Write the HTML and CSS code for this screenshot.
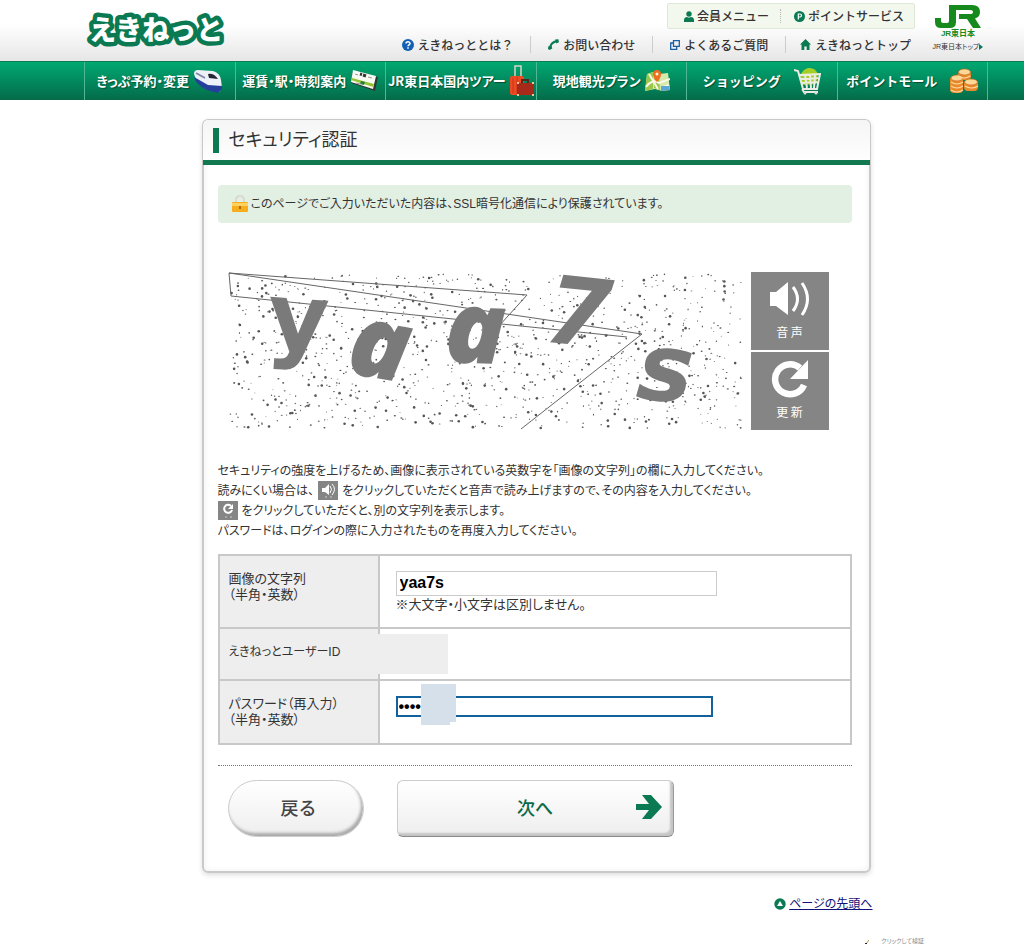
FILE: index.html
```html
<!DOCTYPE html>
<html lang="ja">
<head>
<meta charset="utf-8">
<title>セキュリティ認証 | えきねっと</title>
<link rel="stylesheet" href="styles.css">
</head>
<body>
<header class="site-header" id="top">
  <div class="header-inner">
    <a class="logo" href="#" aria-label="えきねっと">
      <svg width="140" height="42" viewBox="0 0 140 42"><text x="3" y="31" class="logo-text">えきねっと</text></svg>
    </a>
    <div class="menus">
      <nav class="member-menu">
        <a href="#"><svg width="10" height="11" viewBox="0 0 10 11"><circle cx="5" cy="3" r="2.7" fill="#0b7a52"/><path d="M0 11V9Q0 6.300 3 6l2 .7L7 6q3 .3 3 3v2z" fill="#0b7a52"/></svg>会員メニュー</a>
        <a href="#"><svg width="11" height="11" viewBox="0 0 11 11"><circle cx="5.500" cy="5.500" r="5.500" fill="#0b7a52"/><path d="M4.300 8.500V3h1.700a1.500 1.500 0 0 1 0 3H4.300" fill="none" stroke="#fff" stroke-width="1.200"/></svg>ポイントサービス</a>
      </nav>
      <nav class="help-menu">
        <a href="#"><svg width="12" height="12" viewBox="0 0 12 12"><circle cx="6" cy="6" r="6" fill="#1260b4"/><path d="M4 4.600C4 2.300 8 2.300 8 4.500c0 1.400-2 1.300-2 2.700M6 8.300v1.400" fill="none" stroke="#fff" stroke-width="1.500"/></svg>えきねっととは？</a>
        <a href="#"><svg width="11" height="11" viewBox="0 0 11 11"><path d="M2 9Q2.500 3.500 9 2" fill="none" stroke="#0b7a52" stroke-width="2"/><path d="M7 .5l3.500-.2.4 3-2.600 1.200zM.3 7.300L3.500 7l.8 2.600L1.500 11 0 10z" fill="#0b7a52"/></svg>お問い合わせ</a>
        <a href="#"><svg width="10" height="10" viewBox="0 0 10 10"><path d="M3.500.7h5.800v5.600H3.500zM3 3H.7v6.300h6V7" fill="none" stroke="#1a5fa4" stroke-width="1.300"/></svg>よくあるご質問</a>
        <a href="#"><svg width="11" height="11" viewBox="0 0 11 11"><path d="M5.500 0L11 5.500H9.500V11H6.700V7.500H4.300V11H1.500V5.500H0z" fill="#0b7a52"/></svg>えきねっとトップ</a>
      </nav>
    </div>
    <a class="jr" href="#">
      <svg width="46" height="24" viewBox="0 0 46 24" aria-hidden="true"><path d="M14 0h7v17q0 6-6 6H6q-6 0-6-6v-4h6v3q0 2 2 2h4q2 0 2-2z" fill="#168a1d"/><path d="M14 0h23q8 0 8 7 0 5-5 6.500L46 23h-8l-6-9h-8V9h11q3 0 3-2t-3-2H14z" fill="#168a1d"/></svg>
      <strong>JR東日本</strong>
      <span>JR東日本トップ<i></i></span>
    </a>
  </div>
</header>

<nav class="global-nav">
  <div class="global-inner">
    <a href="#">きっぷ予約・変更
      <svg width="30" height="26" viewBox="0 0 30 26"><path d="M1 6Q1 2 5 2l15 1q7 2 8 9l1 8-3 4-11-3Q3 15 1 6z" fill="#eef1f8"/><path d="M1 9l14 8 14 1v3l-4 4-11-3Q3 17 1 9z" fill="#263f9a"/><path d="M15 6q6-1 10 5l-9-1z" fill="#252734"/><path d="M3 5l9 5" stroke="#8089a8" stroke-width="2"/></svg></a>
    <a href="#">運賃・駅・時刻案内
      <svg width="28" height="22" viewBox="0 0 28 22"><path d="M3 1l25 6-3 14-3-1L1 13z" fill="#323732"/><path d="M3 0l23 6-3 13L1 12z" fill="#f8faf4"/><path d="M2 8l22 6-.7 3L1 10z" fill="#95c52e"/><path d="M11 11l4 1-1 3-4-1z" fill="#268044"/><path d="M10 4l2 .6M13 5l3 1" stroke="#333" stroke-width="3"/><path d="M5 4l3 1M18 7l4 1M6 13l5 1" stroke="#999"/></svg></a>
    <a href="#">JR東日本国内ツアー
      <svg width="24" height="32" viewBox="0 0 24 32"><path d="M5 12V1h6v11" fill="none" stroke="#d8d4ca" stroke-width="1.500"/><rect y="11" width="14" height="19" rx="2" fill="#eb4a22"/><path d="M3 13v15M7 12v17" stroke="#c9371b"/><path d="M12 18v-3h6v3" fill="none" stroke="#582719" stroke-width="2"/><rect x="7" y="18" width="17" height="12" rx="1" fill="#a52a19"/><path d="M7 18h2M22 18h2M7 30h2M22 30h2" stroke="#efc693" stroke-width="2"/></svg></a>
    <a href="#">現地観光プラン
      <svg width="25" height="22" viewBox="0 0 25 22"><path d="M2 4l6-2 6 2 9-1 2 17-8 1-7-2-10 2z" fill="#d7e9a9"/><path d="M8 2v17l-8 2 2-17zM14 4l1 16-6-2 1-15z" fill="#9bc64c"/><path d="M1 17Q8 8 14 13l11-4M4 4l9 15M16 18l8-3" fill="none" stroke="#f8f7e8" stroke-width="2"/><path d="M16 16h8l1 4-9 1z" fill="#5ba6d2"/><path d="M8 4a4 4 0 0 1 8 0q0 4-4 8-4-4-4-8z" fill="#ed6d21"/><circle cx="12" cy="4" r="1.500" fill="#fff3d0"/></svg></a>
    <a href="#">ショッピング
      <svg width="27" height="28" viewBox="0 0 27 28"><path d="M6 9q3-7 8-8 7-1 10 6l-2 10-14 1z" fill="#a5cf25"/><path d="M0 3l4 1 5 18h14l3-15-21 1m1 4l19-1M7 16l17-1M11 8l2 13M16 8l1 13M21 8l-1 13M8 22l2 3h14" fill="none" stroke="#ecece5" stroke-width="2"/><circle cx="11" cy="26" r="1.500" fill="#ddd"/><circle cx="22" cy="26" r="1.500" fill="#ddd"/></svg></a>
    <a href="#">ポイントモール
      <svg width="28" height="27" viewBox="0 0 28 27"><g fill="#e98b2c"><rect x="8" y="3" width="13" height="9" rx="4"/><rect y="8" width="13" height="17" rx="4"/><rect x="14" y="12" width="14" height="11" rx="4"/></g><g fill="#ffd898" stroke="#c86a1c" stroke-width=".7"><ellipse cx="14.500" cy="4" rx="6" ry="3"/><ellipse cx="7" cy="10" rx="6" ry="3"/><ellipse cx="21" cy="14" rx="6.500" ry="3"/></g><path d="M8 8q6 4 12 0M1 14q6 4 12 0M1 18q6 4 12 0M1 22q6 4 12 0M15 18q6 4 13 0" fill="none" stroke="#ffdba1" stroke-width="1.200"/></svg></a>
  </div>
</nav>

<main class="page">
  <section class="card">
    <h1>セキュリティ認証</h1>
    <div class="card-body">
      <p class="notice"><svg width="16" height="18" viewBox="0 0 16 18"><path d="M4 8V5q0-4 4-4t4 4v3" fill="none" stroke="#d9d9d2" stroke-width="2"/><rect y="7" width="16" height="10" rx="1" fill="#f6ae1e"/><path d="M0 8h16v3H0z" fill="#fdd25f"/><path d="M8 11v3" stroke="#a9690c" stroke-width="2"/></svg>このページでご入力いただいた内容は、SSL暗号化通信により保護されています。</p>

      <form>
        <div class="picture-row">
          <svg class="picture" viewBox="0 0 515 158" role="img" aria-label="画像の文字列">
            <g id="specks" fill="#555"></g>
            <g class="thin"><path d="M299 23L252 75M1 1L299 23M1 1L3 24 399 65M1 1L414 62 293 157"/></g>
            <g class="letters">
              <text class="upright" x="38" y="78" transform="rotate(4 68 70)">y</text>
              <text class="round" x="120" y="106" transform="rotate(10 150 84)">a</text>
              <text class="round" x="217" y="91" transform="rotate(2 248 65)">a</text>
              <text x="318" y="73" transform="rotate(6 350 40)">7</text>
              <text x="409" y="129" transform="rotate(5 440 104)">s</text>
            </g>
          </svg>
          <div class="picture-tools">
            <button type="button" class="tool"><svg width="44" height="36" viewBox="0 0 44 36"><path d="M2 11h6L20 1v33L8 25H2z" fill="#fff"/><path d="M25 6q9 12 0 24M34 2q11 16 0 32" fill="none" stroke="#fff" stroke-width="3"/></svg><span>音 声</span></button>
            <button type="button" class="tool"><svg width="40" height="38" viewBox="0 0 40 38"><path d="M30 8A15 15 0 1 0 34 25" fill="none" stroke="#fff" stroke-width="6.500"/><path d="M38 0v19H20z" fill="#fff"/></svg><span>更 新</span></button>
          </div>
        </div>

        <p class="guide">セキュリティの強度を上げるため、画像に表示されている英数字を「画像の文字列」の欄に入力してください。<br>
          読みにくい場合は、<span class="mini"><svg viewBox="0 0 20 20"><path d="M4 7h3l4-4v11L7 11H4z" fill="#fff"/><path d="M12 5q3 3 0 7M14 3q5 5 0 11" fill="none" stroke="#fff"/><path d="M7 16h2M12 16h2" stroke="#ccc"/></svg></span>をクリックしていただくと音声で読み上げますので、その内容を入力してください。<br>
          <span class="mini first"><svg viewBox="0 0 20 20"><path d="M13 5a4 4 0 1 0 1 4" fill="none" stroke="#fff" stroke-width="2"/><path d="M15 3v5h-5z" fill="#fff"/><path d="M7 16h2M12 16h2" stroke="#ccc"/></svg></span>をクリックしていただくと、別の文字列を表示します。<br>
          パスワードは、ログインの際に入力されたものを再度入力してください。</p>

        <table class="fields">
          <tr class="row-text">
            <th scope="row"><label for="moji">画像の文字列<br>（半角・英数）</label></th>
            <td><input id="moji" class="plain" type="text" value="yaa7s"><small>※大文字・小文字は区別しません。</small></td>
          </tr>
          <tr class="row-id">
            <th scope="row">えきねっとユーザーID</th>
            <td><span class="id-cover"></span></td>
          </tr>
          <tr class="row-pass">
            <th scope="row"><label for="pass">パスワード（再入力）<br>（半角・英数）</label></th>
            <td><div class="pass-box"><input id="pass" class="focused" type="password" value="abcd"><span class="pass-cover"></span></div></td>
          </tr>
        </table>

        <div class="actions">
          <button type="button" class="back">戻る</button>
          <button type="submit" class="next"><span>次へ</span><svg width="26" height="24" viewBox="0 0 26 24"><path d="M0 9h13L6 0h9l11 12-11 12H6l7-9H0z" fill="#0b7a52"/></svg></button>
        </div>
      </form>
    </div>
  </section>
  <p class="to-top"><svg width="12" height="12" viewBox="0 0 12 12"><circle cx="6" cy="6" r="5.700" fill="#0b7a52"/><path d="M6 3l3 5H3z" fill="#fff"/></svg><a href="#top">ページの先頭へ</a></p>
</main>
<footer class="seal"><svg width="6" height="5" viewBox="0 0 6 5"><path d="M0 5l3-1 3-4" fill="none" stroke="#b89a3c"/><path d="M2 3h2v2H2z" fill="#222"/></svg><span>クリックして検証</span></footer>
<script src="specks.js"></script>
</body>
</html>
```

FILE: styles.css
```css
* { box-sizing: border-box; }
body {
  margin: 0;
  background: #fff;
  color: #333;
  font: 13px/20px "Liberation Sans", "Noto Sans CJK JP", sans-serif;
  font-feature-settings: "palt";
}
a { color: inherit; text-decoration: none; }
button, input { font-family: inherit; }
svg { flex: none; }

.site-header { padding-left: 48px; background: linear-gradient(#fff 40%, #e6e6e6); }
.header-inner { max-width: 904px; height: 61px; margin: 0 auto; display: flex; align-items: flex-start; }
.logo { margin: 9px auto 0 2px; }
.logo svg { display: block; overflow: visible; }
.logo-text {
  font: 900 27px "Noto Sans CJK JP", sans-serif;
  fill: #fff;
  stroke: #0b7a52;
  stroke-width: 9px;
  stroke-linejoin: round;
  paint-order: stroke;
}
.menus { font-size: 12px; font-weight: 500; display: flex; flex-direction: column; align-items: flex-end; padding-top: 3px; }
.menus a { display: flex; align-items: center; gap: 4px; white-space: nowrap; font-family: "Noto Sans CJK JP", sans-serif; font-feature-settings: normal; }
.member-menu { display: flex; width: 248px; height: 26px; background: #f3f8ef; border: 1px solid #dfe8d7; border-radius: 2px; align-items: center; }
.member-menu a { height: 14px; line-height: 14px; padding: 0 11px 0 16px; gap: 3px; }
.member-menu a + a { border-left: 1px dotted #bbb; padding: 0 0 0 13px; }
.help-menu { display: flex; margin-top: 7px; }
.help-menu a { height: 17px; padding: 0 17px; line-height: 17px; border-left: 1px solid #ccc; }
.help-menu a:first-child { border-left: 0; }
.help-menu a:last-child { padding-right: 4px; padding-left: 14px; }
.jr { width: 58px; margin: 5px 1px 0 14px; display: flex; flex-direction: column; align-items: center; white-space: nowrap; }
.jr strong { color: #168a1d; font-size: 8px; line-height: 10px; }
.jr span { font-size: 7px; line-height: 16px; display: flex; align-items: center; }
.jr i { border: 3px solid transparent; border-left: 4px solid #0b7a52; border-right: 0; }

.global-nav { padding-left: 48px; background: linear-gradient(#00a871, #046b49); border-top: 1px solid #0b7a52; }
.global-inner { max-width: 904px; height: 38px; margin: 0 auto; display: grid; grid-template-columns: repeat(6, 1fr); border-right: 1px solid #4fb795; }
.global-inner a {
  display: flex;
  align-items: center;
  justify-content: center;
  gap: 4px;
  color: #fff;
  font: 700 13px/38px "Noto Sans CJK JP", sans-serif;
  font-feature-settings: "palt";
  white-space: nowrap;
  text-shadow: 1px 1px 1px #034d34;
  border-left: 1px solid #4fb795;
}
.global-inner a:nth-child(n+5) { font-feature-settings: normal; gap: 13px; }

.page { padding: 19px 1px 0 49px; }
.card, .to-top { max-width: 669px; margin: 0 auto; }
.card { border: 1px solid #c9c9c9; border-width: 1px 2px 2px; border-radius: 6px; box-shadow: 0 2px 5px #ddd, inset 0 0 6px #eee; }
h1 {
  margin: 0 -1px;
  padding: 8px 10px 7px;
  font-size: 18px;
  line-height: 25px;
  font-weight: 400;
  background: linear-gradient(#f5f5f5, #fefefe);
  border-bottom: 5px solid #117850;
  border-radius: 5px 5px 0 0;
  display: flex;
  gap: 10px;
}
h1::before { content: ""; width: 6px; height: 25px; background: #0b7a52; }
.card-body { padding: 20px 17px 34px 14px; }
.notice { margin: 0; padding: 9px 14px; background: #e2efe3; border-radius: 4px; display: flex; align-items: center; gap: 3px; font-size: 12px; }
.picture-row { margin: 49px 0 0 10px; display: flex; gap: 8px; }
.picture { width: 515px; height: 158px; min-width: 0; flex: 0 1 515px; overflow: visible; }
.thin { fill: none; stroke: #666; stroke-width: 1; }
.letters { fill: #7a7a7a; font: italic 700 94px "DejaVu Sans", sans-serif; }
.letters .upright { font-style: normal; }
.letters .round { font: italic 800 100px "Open Sans", sans-serif; }
.picture-tools { display: flex; flex-direction: column; gap: 2px; }
.tool { width: 78px; height: 78px; padding: 8px 0 0; border: 0; background: #858585; color: #fff; display: flex; flex-direction: column; align-items: center; gap: 4px; }
.tool svg { height: 38px; }
.tool span { font-size: 12px; line-height: 20px; font-family: "Noto Sans CJK JP", sans-serif; font-weight: 400; }
.guide { margin: 31px 0 0; font-size: 12px; line-height: 20px; }
.mini { display: inline-block; width: 20px; height: 20px; margin: 0 4px; background: #858585; vertical-align: top; border-bottom: 1px solid #fff; }
.mini.first { margin-left: 0; }
.mini svg { display: block; }

.fields { width: 100%; margin-top: 13px; border-collapse: collapse; line-height: 16px; }
.fields th, .fields td { border: 2px solid #c8c8c8; padding: 0; vertical-align: middle; }
.fields th { width: 160px; padding: 0 0 9px 9px; text-align: left; font-weight: 400; background: #eee; }
.fields td { padding-left: 16px; }
.row-text { height: 73px; }
.row-id { height: 52px; }
.row-pass { height: 64px; }
.fields .row-id th { padding-bottom: 4px; padding-right: 0; font-size: 12px; }
.fields .row-pass th { padding-bottom: 1px; }
.fields input { display: block; outline: 0; padding: 0 3px; font-weight: 700; font-size: 16px; color: #000; background: #fff; }
.plain { width: 321px; max-width: 100%; height: 25px; border: 1px solid #ccc; }
.fields small { display: block; font-size: 13px; line-height: 17px; }
.id-cover { display: block; width: 70px; height: 40px; margin-left: -18px; background: #eee; position: relative; }
.pass-box { position: relative; margin-bottom: 11px; }
.fields .focused { width: 317px; max-width: 100%; height: 21px; border: 2px solid #12609c; padding: 0 1px; }
.pass-cover { position: absolute; left: 25px; top: -12px; width: 35px; height: 38px; background: #d6e0ea; }
.pass-cover::after { content: ""; position: absolute; left: 0; top: 100%; width: 29px; height: 3px; background: #d6e0ea; }

.actions { margin-top: 20px; padding: 14px 10px 0; border-top: 1px dotted #777; display: flex; gap: 33px; }
.actions button { height: 57px; border: 1px solid #ccc; background: linear-gradient(#fff, #eee); font: 500 18px/50px "Noto Sans CJK JP", sans-serif; color: #444; padding-bottom: 4px; }
.actions .back { width: 136px; border-radius: 29px; box-shadow: inset -2px -3px 3px #aaa; padding-left: 12px; }
.actions .next { width: 277px; border-radius: 6px; box-shadow: inset -3px -3px 2px #c4c4c4; border-bottom-color: #888; border-right-color: #999; color: #0b6b48; padding: 0 11px 4px; display: grid; grid-template-columns: 26px 1fr 26px; align-items: center; }
.next span { grid-column: 2; }
.to-top { margin-top: 21px; display: flex; justify-content: flex-end; align-items: center; gap: 3px; font-size: 12px; }
.to-top a { color: #11117a; text-decoration: underline; margin-right: -2px; }
.seal { display: flex; justify-content: flex-end; gap: 12px; padding-right: 100px; margin-top: 23px; font-size: 6px; line-height: 8px; color: #888; align-items: flex-end; }
```

FILE: specks.js
```js
// Scatters small grey specks over the picture, with a fixed seed so that they stay put.
(function () {
  var seed = 4711;
  function next() {
    seed = (seed * 16807) % 2147483647;
    return seed / 2147483647;
  }
  var group = document.getElementById("specks");
  for (var i = 0; i < 1150; i++) {
    var dot = document.createElementNS("http://www.w3.org/2000/svg", "ellipse");
    var size = next();
    dot.setAttribute("cx", 2 + next() * 511);
    dot.setAttribute("cy", 2 + next() * 154);
    dot.setAttribute("rx", size > 0.8 ? 1.3 : 0.5 + next() * 0.6);
    dot.setAttribute("ry", size > 0.8 ? 1.3 : 0.4 + next() * 0.5);
    group.appendChild(dot);
  }
})();
```
